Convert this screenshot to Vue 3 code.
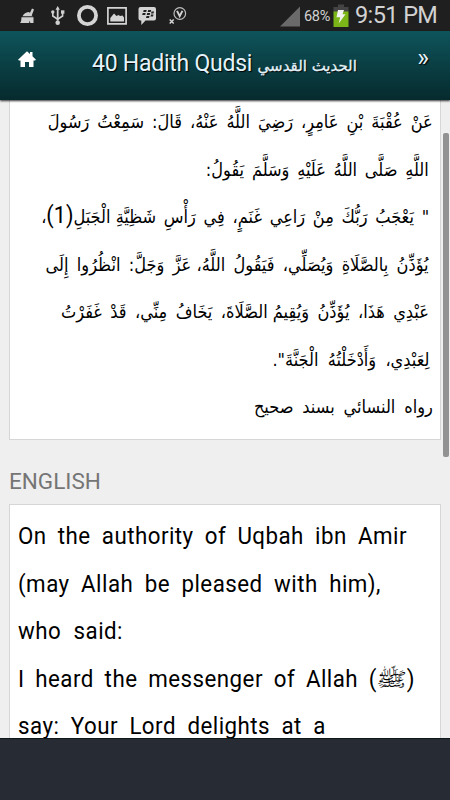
<template>
  <div class="screen">
    <!-- status bar -->
    <div class="status-bar">
      <svg class="status-icons" width="200" height="31" viewBox="0 0 200 31">
        <g fill="#cfcfcf">
          <path d="M32 8.500l2 1-2.300 6 1.300.8h-10.500q2-3.800 6-4.300l1.500.8z" />
          <path d="M21.500 17.200h12v5.800h-3.200l-.6-2.500-.6 2.500h-9q1.500-2 1.400-5.800z" />
          <path d="M55.500 9.700l2.200-3.700 2.200 3.700h-1.300v11h-1.800v-11z" />
          <circle cx="57.700" cy="22.700" r="2.300" />
          <circle cx="52.800" cy="12" r="1.700" />
          <path d="M61 10.300h3.400v3.400H61z" />
        </g>
        <path d="M52.800 12v4l4.900 3.200 4.900-3.200V12" fill="none" stroke="#cfcfcf" stroke-width="1.600" />
        <circle cx="87.500" cy="15.500" r="8.600" fill="none" stroke="#d4d4d4" stroke-width="3.800" />
        <path d="M107.900 7.800h18.200v16h-18.200z" fill="none" stroke="#d4d4d4" stroke-width="1.700" />
        <path d="M110.300 21.500v-3.500l3.700-4.500 2.500 2.500 2-1 1.500 1 2.500-.5 1.500 2v4z" fill="#d4d4d4" />
        <path d="M140.500 7h13.500q2 0 2 2v9.500q0 2-2 2h-8.500l-4.200 4.500v-4.500h-.8q-2 0-2-2V9q0-2 2-2z" fill="#d4d4d4" />
        <path d="M143.700 10h3l-.5 2h-3zM148.200 10h3l-.5 2h-3zM142.700 13h3l-.5 2h-3zM147.200 13h3l-.5 2h-3zM151.500 11.500h2.500l-.5 2H151zM151 14.500h2.500l-.5 2h-2.500zM146.500 16h3l-.5 2h-3z" fill="#222" />
        <circle cx="179.800" cy="13.500" r="5.800" fill="none" stroke="#bdbdbd" stroke-width="1.200" />
        <path d="M177 10.800l2.700 5.400 2.700-5.400" fill="none" stroke="#d4d4d4" stroke-width="1.900" />
        <path d="M169.700 19.500l4 4M173.700 19.500l-4 4" stroke="#d4d4d4" stroke-width="1.500" />
      </svg>
      <div class="status-right">
        <svg width="21" height="31" viewBox="0 0 21 31">
          <path d="M20 6.500v20H0z" fill="#6a6a6a" />
        </svg>
        <span class="percent">68%</span>
        <svg class="battery" width="16" height="31" viewBox="0 0 16 31">
          <path d="M5 4.500h6v2.500h4.500v5H.5V7H5z" fill="#444" />
          <path d="M.5 11.500h15v15.500H.5z" fill="#7cb518" />
          <path d="M5 10h6l-1.500 4.300h3L5.700 23.500l1.500-6.200H3.500z" fill="#f2f2f2" />
        </svg>
        <span class="clock">9:51 PM</span>
      </div>
    </div>

    <!-- header -->
    <header class="header">
      <svg class="home" width="18" height="17" viewBox="0 0 18 17">
        <path d="M9 0.300l3 2.800V1h2.500v4.300L18 8.700l-1 .9h-1.500V16H11v-5H7v5H2.500V9.600H1l-1-.9z" fill="#fff" />
      </svg>
      <h1 class="title">40 Hadith Qudsi <span class="title-ar">الحديث القدسي</span></h1>
      <span class="next">»</span>
    </header>

    <!-- hadith -->
    <main class="content">
      <section class="card arabic" dir="rtl" lang="ar">
        <p
          v-for="(line, index) in arabicLines"
          :key="index"
          class="line"
          :class="{ flush: line.flush }"
          :style="{ width: line.width / 0.9 + 'px' }"
        >
          <span v-for="(word, i) in line.text.split(' ')" :key="i">
            <template v-if="word.includes('(1)')">{{ word.split('(1)')[0] }}<span class="latin">(1)</span>{{ word.split('(1)')[1] }}</template>
            <template v-else>{{ word }}</template>
          </span>
        </p>
      </section>

      <h2 class="section-title">ENGLISH</h2>

      <section class="card english">
        <p
          v-for="(line, index) in englishLines"
          :key="index"
          class="line"
          :style="{ width: line.width / 0.93 + 'px' }"
        >
          <span v-for="(word, i) in line.text.split(' ')" :key="i">
            <template v-if="word === '(ﷺ)'">(<span class="honorific">ﷺ</span>)</template>
            <template v-else>{{ word }}</template>
          </span>
        </p>
      </section>

      <div class="scrollbar"></div>
    </main>

    <footer class="ad-bar"></footer>
  </div>
</template>

<script setup>
// words of a line are spread over its own width, \u00a0 keeps a tight pair together
const arabicLines = [
  { text: 'عَنْ عُقْبَةَ بْنِ عَامِرٍ، رَضِيَ اللَّهُ عَنْهُ، قَالَ: سَمِعْتُ رَسُولَ', width: 385, flush: true },
  { text: 'اللَّهِ صَلَّى اللَّهُ عَلَيْهِ وَسَلَّمَ يَقُولُ:', width: 223 },
  { text: '" يَعْجَبُ رَبُّكَ مِنْ رَاعِي غَنَمٍ، فِي رَأْسِ شَظِيَّةِ\u00a0الْجَبَلِ(1)،', width: 388 },
  { text: 'يُؤَذِّنُ بِالصَّلَاةِ وَيُصَلِّي، فَيَقُولُ اللَّهُ،\u00a0عَزَّ وَجَلَّ: انْظُرُوا إِلَى', width: 383 },
  { text: 'عَبْدِي هَذَا، يُؤَذِّنُ وَيُقِيمُ\u00a0الصَّلَاةَ، يَخَافُ مِنِّي، قَدْ غَفَرْتُ', width: 368 },
  { text: 'لِعَبْدِي، وَأَدْخَلْتُهُ الْجَنَّةَ".', width: 157 },
  { text: 'رواه النسائي بسند صحيح', width: 179, flush: true }
]

const englishLines = [
  { text: 'On the authority of Uqbah ibn Amir', width: 389 },
  { text: '(may Allah be pleased with him),', width: 363 },
  { text: 'who said:', width: 105 },
  { text: 'I heard the messenger of Allah (ﷺ)', width: 397 },
  { text: 'say: Your Lord delights at a', width: 308 }
]
</script>

<style>
body {
  margin: 0;
  background: #efefef;
}
</style>

<style scoped>
* {
  box-sizing: border-box;
}

.screen {
  width: 450px;
  height: 800px;
  display: flex;
  flex-direction: column;
  overflow: hidden;
  background: #efefef;
  font-family: Roboto, 'DejaVu Sans', sans-serif;
}

.status-bar {
  height: 31px;
  flex: none;
  display: flex;
  justify-content: space-between;
  background: #1f1f1f;
  color: #d2d2d2;
}

.status-right {
  display: flex;
  align-items: center;
  padding-right: 13px;
  white-space: nowrap;
}

.percent {
  width: 28px;
  margin-left: 3px;
  padding-top: 1px;
  font-size: 14.5px;
  letter-spacing: -0.3px;
}

.battery {
  margin-left: 1px;
}

.clock {
  width: 82px;
  margin-left: 6px;
  font-size: 23.5px;
  line-height: 31px;
  letter-spacing: -0.6px;
}

.header {
  height: 69px;
  flex: none;
  display: flex;
  align-items: flex-start;
  position: relative;
  z-index: 2;
  padding: 0 21px 0 18px;
  background: linear-gradient(#0e545b, #062a2d);
  box-shadow: 0 1px 2px rgba(0, 0, 0, 0.8);
  color: #e4f3fa;
}

.home {
  margin-top: 20px;
}

.title {
  flex: 1;
  margin: 0 0 0 56px;
  font-size: 23px;
  font-weight: 400;
  line-height: 65px;
  letter-spacing: -0.25px;
  white-space: nowrap;
  text-shadow: 1px 1px 1px #000;
}

.title-ar {
  font-family: 'DejaVu Sans', sans-serif;
  font-size: 15px;
  letter-spacing: 0;
  -webkit-text-stroke: 0.3px #e4f3fa;
}

.next {
  font-size: 25px;
  line-height: 53px;
  text-shadow: 1px 1px 1px #000;
}

.content {
  flex: 1;
  min-height: 0;
  position: relative;
  overflow: hidden;
  padding: 0 9px;
}

.card {
  background: #fff;
  border: 1px solid #d6d6d6;
  color: #000;
}

.line {
  display: flex;
  justify-content: space-between;
  margin: 0;
  height: 47.5px;
  line-height: 47.5px;
  white-space: nowrap;
}

.arabic {
  height: 340px;
  border-top: 0;
  padding: 0 11px 0 0;
  font-family: 'DejaVu Sans', sans-serif;
  font-size: 18px;
}

.arabic .line {
  position: relative;
  top: -2px;
  transform: scaleX(0.9);
  transform-origin: right center;
}

.arabic .flush {
  margin-right: -4px;
}

.latin {
  font-family: Roboto, sans-serif;
  font-size: 24px;
  line-height: 1;
}

.section-title {
  height: 64px;
  margin: 0;
  font-size: 22.5px;
  font-weight: 400;
  line-height: 83px;
  color: #757575;
}

.english {
  height: 300px;
  padding: 8px 8px 0;
  font-size: 24px;
}

.english .line {
  letter-spacing: 0.5px;
  transform: scaleX(0.93);
  transform-origin: left center;
}

.honorific {
  display: inline-block;
  font-family: 'DejaVu Sans', 'Noto Sans', serif;
  line-height: 1;
  margin: 0 1.5px;
  transform: scale(1.15, 0.82);
}

.scrollbar {
  position: absolute;
  top: 33px;
  right: 1px;
  width: 6px;
  height: 324px;
  border-radius: 2px;
  background: #929292;
}

.ad-bar {
  height: 62px;
  flex: none;
  border-top: 1px solid #101718;
  background: #272b34;
}
</style>
